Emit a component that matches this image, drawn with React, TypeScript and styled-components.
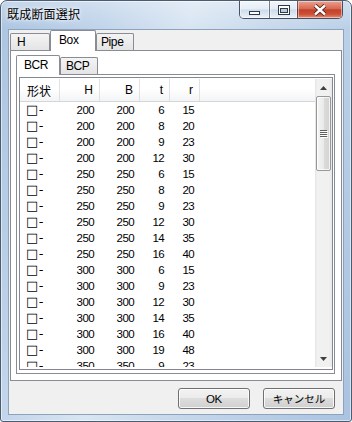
import React from "react";
import styled, { createGlobalStyle } from "styled-components";

const LATIN = `"Liberation Sans", Arial, sans-serif`;
const JP = `"Noto Sans CJK JP", "Liberation Sans", sans-serif`;

const GlobalStyle = createGlobalStyle`
  html, body {
    margin: 0;
    padding: 0;
    background: #ffffff;
  }
  * {
    box-sizing: border-box;
  }
`;

const Window = styled.div`
  width: 352px;
  height: 422px;
  display: flex;
  flex-direction: column;
  border: 1px solid #4b5b70;
  border-radius: 7px 7px 3px 3px;
  overflow: hidden;
  background: linear-gradient(180deg, rgba(255, 255, 255, 0.3) 0px, rgba(255, 255, 255, 0) 28px),
    linear-gradient(
      105deg,
      #aac4e1 0%,
      #bfd3ea 22%,
      #d8e5f2 42%,
      #c9daec 58%,
      #b9cfe7 78%,
      #a9c3e0 100%
    );
  box-shadow: inset 0 0 0 1px rgba(255, 255, 255, 0.55);
`;

const TitleBar = styled.div`
  height: 28px;
  flex: none;
  display: flex;
  align-items: flex-start;
  padding-left: 6px;
`;

const Title = styled.div`
  flex: 1;
  margin-top: 5px;
  font-family: ${JP};
  font-size: 12px;
  line-height: 16px;
  letter-spacing: 0.2px;
  color: #000;
  text-shadow: 0 0 6px #ffffff, 0 0 3px rgba(255, 255, 255, 0.9);
`;

const CaptionGroup = styled.div`
  display: flex;
  height: 18px;
  margin-right: 8px;
  border: 1px solid rgba(35, 45, 65, 0.8);
  border-top: none;
  border-radius: 0 0 5px 5px;
  overflow: hidden;
`;

const CaptionButton = styled.div<{ $w: number; $close?: boolean }>`
  width: ${(p) => p.$w}px;
  display: flex;
  align-items: center;
  justify-content: center;
  & + & {
    border-left: 1px solid rgba(35, 45, 65, 0.6);
  }
  background: ${(p) =>
    p.$close
      ? "linear-gradient(#eba190 0%, #d86a52 45%, #c4402a 52%, #cc5038 78%, #e59079 100%)"
      : "linear-gradient(rgba(255,255,255,0.65) 0%, rgba(255,255,255,0.35) 48%, rgba(190,208,230,0.4) 52%, rgba(255,255,255,0.6) 100%)"};
  box-shadow: inset 0 0 0 1px rgba(255, 255, 255, 0.45);
`;

const Client = styled.div`
  flex: 1;
  margin: 0 7px 6px 7px;
  border: 1px solid #8ea2ba;
  background: #f0f0f0;
  display: flex;
  flex-direction: column;
  padding: 0 1px;
`;

const TabControl = styled.div<{ $h: number }>`
  height: ${(p) => p.$h}px;
  display: flex;
  flex-direction: column;
  flex: none;
`;

const TabStrip = styled.div<{ $h: number }>`
  height: ${(p) => p.$h}px;
  flex: none;
  display: flex;
  align-items: flex-end;
  position: relative;
  z-index: 1;
`;

const Tab = styled.div<{ $active?: boolean; $w: number; $pad: number; $h: number }>`
  width: ${(p) => p.$w}px;
  height: ${(p) => p.$h}px;
  margin-bottom: ${(p) => (p.$active ? -1 : 0)}px;
  padding-left: ${(p) => p.$pad}px;
  padding-bottom: ${(p) => (p.$active ? 2 : 0)}px;
  display: flex;
  align-items: center;
  border: 1px solid #898c95;
  border-bottom: none;
  border-radius: 2px 2px 0 0;
  background: ${(p) => (p.$active ? "#ffffff" : "linear-gradient(#f4f4f4, #e4e4e4)")};
  font-family: ${LATIN};
  font-size: 12px;
  letter-spacing: -0.4px;
  color: #000;
`;

const TabPanel = styled.div<{ $pad: string }>`
  flex: 1;
  border: 1px solid #898c95;
  background: #ffffff;
  padding: ${(p) => p.$pad};
  display: flex;
  flex-direction: column;
`;

const ListView = styled.div`
  height: 293px;
  flex: none;
  border: 1px solid #828790;
  background: #ffffff;
  padding: 1px 0 2px 0;
  display: flex;
`;

const ListArea = styled.div`
  flex: 1;
  min-width: 0;
  display: flex;
  flex-direction: column;
  overflow: hidden;
`;

const HeaderRow = styled.div`
  height: 23px;
  flex: none;
  display: flex;
  border-bottom: 1px solid #d5d5d5;
  background: linear-gradient(#ffffff 0%, #ffffff 45%, #f3f4f6 100%);
`;

const HeaderCell = styled.div<{ $w: number; $left?: boolean }>`
  width: ${(p) => p.$w}px;
  flex: none;
  display: flex;
  align-items: center;
  justify-content: ${(p) => (p.$left ? "flex-start" : "flex-end")};
  padding: ${(p) => (p.$left ? "0 0 0 7px" : "0 6px 0 0")};
  border-right: 1px solid #e0e1e4;
  font-family: ${(p) => (p.$left ? JP : LATIN)};
  font-size: 12px;
  color: #000;
`;

const Rows = styled.div`
  flex: 1;
  overflow: hidden;
`;

const Row = styled.div`
  height: 16px;
  display: flex;
  align-items: center;
`;

const Cell = styled.div<{ $w: number; $shape?: boolean }>`
  width: ${(p) => p.$w}px;
  flex: none;
  text-align: ${(p) => (p.$shape ? "left" : "right")};
  padding: ${(p) => (p.$shape ? "0 0 0 6px" : "0 6px 0 0")};
  font-family: ${(p) => (p.$shape ? `"DejaVu Sans", sans-serif` : LATIN)};
  font-size: ${(p) => (p.$shape ? 13 : 11.5)}px;
  letter-spacing: ${(p) => (p.$shape ? 0.5 : -0.6)}px;
  line-height: 16px;
  color: #000;
  white-space: nowrap;
`;

const ScrollBar = styled.div`
  width: 17px;
  flex: none;
  display: flex;
  flex-direction: column;
  background: linear-gradient(to right, #e3e3e3 0px, #f1f1f1 2px, #f1f1f1 14px, #e8e8e8 17px);
`;

const ScrollArrow = styled.div`
  height: 17px;
  flex: none;
  display: flex;
  align-items: center;
  justify-content: center;
`;

const Thumb = styled.div`
  height: 75px;
  flex: none;
  margin: 0 1px;
  border: 1px solid #979797;
  border-radius: 2px;
  background: linear-gradient(to right, #f6f6f6 0%, #eaeaea 50%, #dcdcdc 51%, #d3d3d3 100%);
  box-shadow: inset 0 0 0 1px rgba(255, 255, 255, 0.75);
  display: flex;
  align-items: center;
  justify-content: center;
`;

const Track = styled.div`
  flex: 1;
`;

const ButtonRow = styled.div`
  display: flex;
  justify-content: flex-end;
  gap: 13px;
  margin-top: 7px;
  padding-right: 7px;
`;

const DialogButton = styled.button<{ $jp?: boolean }>`
  width: 72px;
  height: 21px;
  padding: 0;
  border: 1px solid #707070;
  border-radius: 3px;
  background: linear-gradient(#f2f2f2 0%, #ebebeb 50%, #dddddd 50%, #cfcfcf 100%);
  box-shadow: inset 0 0 0 1px rgba(255, 255, 255, 0.8);
  font-family: ${(p) => (p.$jp ? JP : LATIN)};
  font-size: ${(p) => (p.$jp ? 10.5 : 11.5)}px;
  letter-spacing: ${(p) => (p.$jp ? 0 : -0.4)}px;
  color: #000;
`;

const columns = [
  { label: "形状", w: 40, left: true },
  { label: "H", w: 40 },
  { label: "B", w: 40 },
  { label: "t", w: 30 },
  { label: "r", w: 30 },
];

const sections: [number, number, number, number][] = [
  [200, 200, 6, 15],
  [200, 200, 8, 20],
  [200, 200, 9, 23],
  [200, 200, 12, 30],
  [250, 250, 6, 15],
  [250, 250, 8, 20],
  [250, 250, 9, 23],
  [250, 250, 12, 30],
  [250, 250, 14, 35],
  [250, 250, 16, 40],
  [300, 300, 6, 15],
  [300, 300, 9, 23],
  [300, 300, 12, 30],
  [300, 300, 14, 35],
  [300, 300, 16, 40],
  [300, 300, 19, 48],
  [350, 350, 9, 23],
  [350, 350, 12, 30],
];

const MinGlyph = () => (
  <svg width="13" height="12" viewBox="0 0 13 12">
    <rect x="1.5" y="7.5" width="10" height="3" fill="#ffffff" stroke="#2f3a48" />
  </svg>
);

const MaxGlyph = () => (
  <svg width="12" height="10" viewBox="0 0 12 10">
    <rect x="0.5" y="0.5" width="11" height="9" fill="#ffffff" stroke="#2f3a48" />
    <rect x="2.5" y="3.5" width="7" height="4" fill="#b9cbe0" stroke="#2f3a48" />
  </svg>
);

const CloseGlyph = () => (
  <svg width="16" height="12" viewBox="0 0 16 12">
    <path d="M3 1.5 L13 10.5 M13 1.5 L3 10.5" stroke="#4a1c14" strokeWidth="4.2" />
    <path d="M3 1.5 L13 10.5 M13 1.5 L3 10.5" stroke="#ffffff" strokeWidth="2.4" />
  </svg>
);

const ArrowGlyph = ({ down }: { down?: boolean }) => (
  <svg width="7" height="4" viewBox="0 0 7 4">
    <polygon points={down ? "0,0 7,0 3.5,4" : "3.5,0 7,4 0,4"} fill="#404040" />
  </svg>
);

const GripGlyph = () => (
  <svg width="8" height="8" viewBox="0 0 8 8">
    {[0, 2, 4, 6].map((y) => (
      <g key={y}>
        <rect x="0" y={y} width="7" height="1" fill="#5e5e5e" />
        <rect x="1" y={y + 1} width="7" height="1" fill="#ffffff" />
      </g>
    ))}
  </svg>
);

export default function App() {
  return (
    <>
      <GlobalStyle />
      <Window>
        <TitleBar>
          <Title>既成断面選択</Title>
          <CaptionGroup>
            <CaptionButton $w={29}>
              <MinGlyph />
            </CaptionButton>
            <CaptionButton $w={28}>
              <MaxGlyph />
            </CaptionButton>
            <CaptionButton $w={45} $close>
              <CloseGlyph />
            </CaptionButton>
          </CaptionGroup>
        </TitleBar>
        <Client>
          <TabControl $h={351}>
            <TabStrip $h={20}>
              <Tab $w={40} $pad={6} $h={17}>
                H
              </Tab>
              <Tab $w={46} $pad={8} $h={21} $active>
                Box
              </Tab>
              <Tab $w={38} $pad={4} $h={17}>
                Pipe
              </Tab>
            </TabStrip>
            <TabPanel $pad="4px 6px 6px 5px">
              <TabControl $h={319}>
                <TabStrip $h={19}>
                  <Tab $w={44} $pad={7} $h={20} $active>
                    BCR
                  </Tab>
                  <Tab $w={38} $pad={5} $h={17}>
                    BCP
                  </Tab>
                </TabStrip>
                <TabPanel $pad="2px 1px 3px 2px">
                  <ListView>
                    <ListArea>
                      <HeaderRow>
                        {columns.map((c) => (
                          <HeaderCell key={c.label} $w={c.w} $left={c.left}>
                            {c.label}
                          </HeaderCell>
                        ))}
                      </HeaderRow>
                      <Rows>
                        {sections.map(([h, b, t, r], i) => (
                          <Row key={i}>
                            <Cell $w={40} $shape>
                              □-
                            </Cell>
                            <Cell $w={40}>{h}</Cell>
                            <Cell $w={40}>{b}</Cell>
                            <Cell $w={30}>{t}</Cell>
                            <Cell $w={30}>{r}</Cell>
                          </Row>
                        ))}
                      </Rows>
                    </ListArea>
                    <ScrollBar>
                      <ScrollArrow>
                        <ArrowGlyph />
                      </ScrollArrow>
                      <Thumb>
                        <GripGlyph />
                      </Thumb>
                      <Track />
                      <ScrollArrow>
                        <ArrowGlyph down />
                      </ScrollArrow>
                    </ScrollBar>
                  </ListView>
                </TabPanel>
              </TabControl>
            </TabPanel>
          </TabControl>
          <ButtonRow>
            <DialogButton>OK</DialogButton>
            <DialogButton $jp>キャンセル</DialogButton>
          </ButtonRow>
        </Client>
      </Window>
    </>
  );
}
